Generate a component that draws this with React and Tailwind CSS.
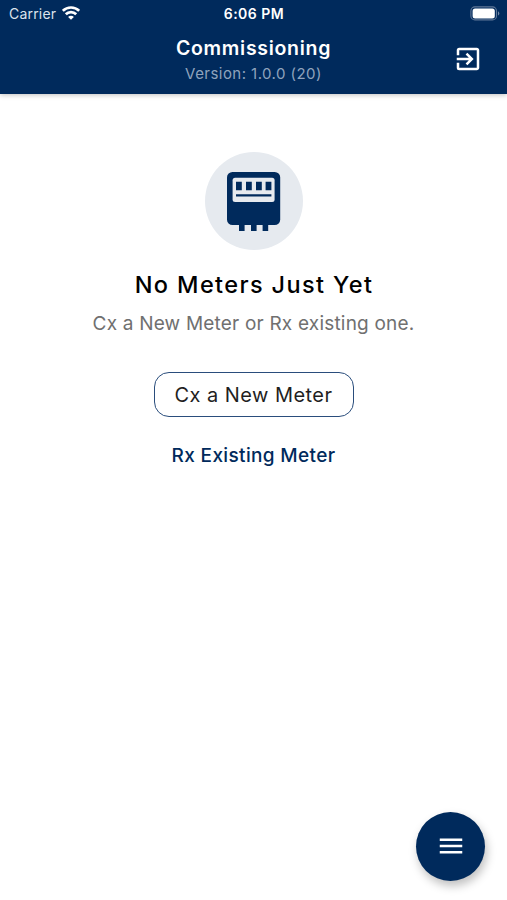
import React from 'react';
import { MdExitToApp, MdMenu } from 'react-icons/md';

const WifiIcon = () => (
  <svg width="18" height="14" viewBox="0 0 18 14" fill="none" stroke="white" strokeWidth="2.7">
    <path d="M0.8 4.9 A11.6 11.6 0 0 1 17.2 4.9" />
    <path d="M3.8 8.3 A7.3 7.3 0 0 1 14.2 8.3" />
    <path d="M9 13.8 L6.1 11 A4 4 0 0 1 11.9 11 Z" fill="white" stroke="none" />
  </svg>
);

const BatteryIcon = () => (
  <svg width="31" height="15" viewBox="0 0 31 15">
    <rect x="0.9" y="0.9" width="25.6" height="13" rx="4" fill="none" stroke="#5f7797" strokeWidth="1.1" />
    <rect x="2.6" y="2.4" width="22.2" height="10" rx="2.5" fill="white" />
    <path d="M28 5.2 A2.5 2.5 0 0 1 28 9.6 Z" fill="#7288a5" />
  </svg>
);

const MeterIcon = () => (
  <svg width="54" height="60" viewBox="0 0 54 60" fill="#002a5c">
    <rect x="0" y="0" width="53.2" height="53" rx="5.5" />
    <path d="M12 52h5.6v7h-5.6z M24 52h5.6v7h-5.6z M35.6 52h5.6v7h-5.6z" />
    <rect x="5.6" y="5.7" width="42" height="24.3" rx="2.5" fill="#e6eaef" />
    <path d="M9 9.7h5.8v8.6h-5.8z M19 9.7h5.8v8.6h-5.8z M29 9.7h5.8v8.6h-5.8z M38.6 9.7h5.8v8.6h-5.8z" />
    <path d="M9 22.2h35.4v2.2h-35.4z" />
  </svg>
);

const StatusBar = () => (
  <div className="grid h-[26px] grid-cols-[1fr_auto_1fr] items-center pl-[9px] pr-[6px] text-white">
    <div className="flex items-center gap-[6px]">
      <span className="text-[14px] tracking-[0.2px] text-[#dce3ec]">Carrier</span>
      <WifiIcon />
    </div>
    <span className="pr-[2px] text-center text-[14px] font-semibold tracking-[0.5px]">6:06 PM</span>
    <div className="flex justify-end">
      <BatteryIcon />
    </div>
  </div>
);

const Header = () => (
  <header className="h-[94px] bg-[#002a5c] shadow-[0_1px_5px_rgba(0,0,0,0.25)]">
    <StatusBar />
    <div className="grid grid-cols-[1fr_auto_1fr] items-center">
      <div />
      <div className="flex flex-col items-center pt-[9px]">
        <h1 className="text-[19.5px] leading-[26px] font-semibold tracking-[0.7px] text-white">Commissioning</h1>
        <p className="text-[15px] leading-[26px] tracking-[0.45px] text-[#8fa3bc]">Version: 1.0.0 (20)</p>
      </div>
      <button aria-label="Log out" className="mr-[24.5px] mt-[5px] justify-self-end text-white">
        <MdExitToApp size={30} />
      </button>
    </div>
  </header>
);

const App = () => {
  return (
    <div className="relative flex h-[900px] w-[507px] flex-col overflow-hidden bg-white font-['Inter',sans-serif]">
      <Header />

      <main className="flex flex-col items-center pt-[58px]">
        <div className="flex h-[98px] w-[98px] items-center justify-center rounded-full bg-[#e6eaef] pt-[2px]">
          <MeterIcon />
        </div>
        <h2 className="mt-[19px] pl-[1px] text-[23.5px] leading-[32px] font-medium tracking-[1.38px] text-black">No Meters Just Yet</h2>
        <p className="mt-[9px] text-[19px] leading-[28px] tracking-[0.2px] text-[#707070]">Cx a New Meter or Rx existing one.</p>
        <button className="mt-[34px] h-[45px] w-[200px] rounded-[15px] border border-[#2a4d7c] text-[20px] tracking-[0.45px] text-[#1f1f1f]">
          Cx a New Meter
        </button>
        <button className="mt-[25px] text-[19px] leading-[28px] font-medium tracking-[0.35px] text-[#002a5c]">Rx Existing Meter</button>
      </main>

      <button
        aria-label="Menu"
        className="absolute right-[22px] bottom-[19.5px] flex h-[69px] w-[69px] items-center justify-center rounded-full bg-[#002a5c] text-white shadow-[2px_5px_10px_rgba(0,0,0,0.25)]"
      >
        <MdMenu size={30} />
      </button>
    </div>
  );
};

export default App;
